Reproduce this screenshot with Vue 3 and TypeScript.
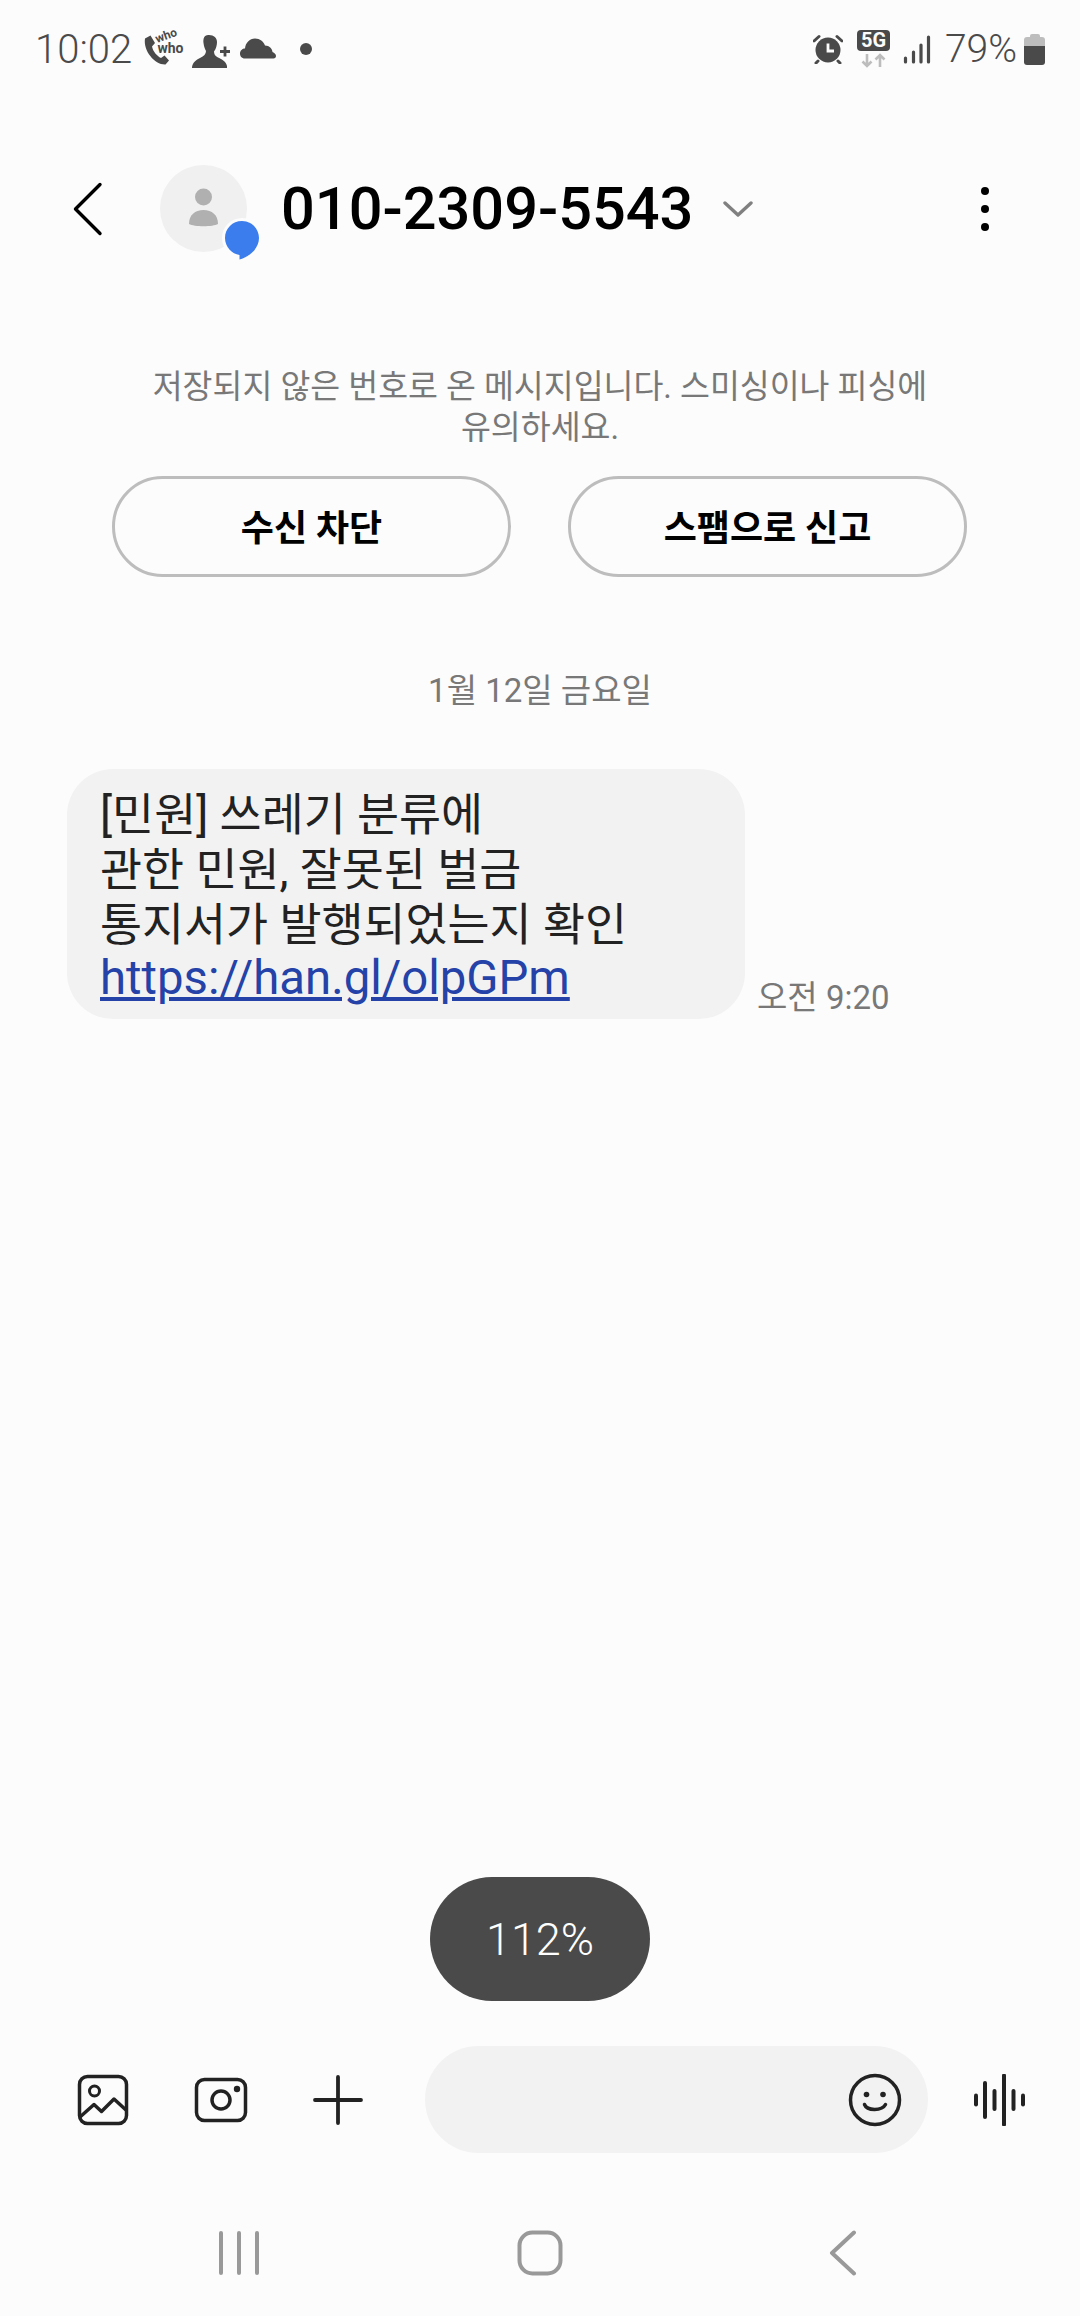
<script setup lang="ts">
const lines: string[] = [
  "[민원] 쓰레기 분류에",
  "관한 민원, 잘못된 벌금",
  "통지서가 발행되었는지 확인",
];
const waveBars: { x: number; h: number }[] = [
  { x: 3, h: 9 },
  { x: 12, h: 34 },
  { x: 21.5, h: 18 },
  { x: 31, h: 49 },
  { x: 40.5, h: 18 },
  { x: 50, h: 9 },
];
</script>

<template>
  <div class="page">
    <!-- status bar -->
    <div class="status">
      <span class="clock">10:02</span>
      <svg class="ic-call" width="40" height="34" viewBox="0 0 40 34">
        <path d="M1 6.500 6.500 3.500 11 11 8 14.500C9 19.500 13 24 17 26L20.500 23.500 25 28.500 21.500 32.500C11 33 -1 19 1 6.500Z" fill="#4a4a4a" />
        <text x="13" y="11" class="who who-top" transform="rotate(-20 13 11)">who</text>
        <text x="13.500" y="20.500" class="who">who</text>
      </svg>
      <svg class="ic-person" width="38" height="34" viewBox="0 0 38 34">
        <path d="M17 1C12 .5 11 5 11.500 9 12 13 13 15 14 17 14 20 12 22 8 24 4 26 1 28 0 33V34H35V32C34 27 29 25 26 23.500 23 22 22 20 22 17.500 24 15 25 11 25 8 25 4 22 1 17 1Z" fill="#4a4a4a" />
        <path d="M28 17.500H38M33 12.500V22.500" stroke="#4a4a4a" stroke-width="2.800" />
      </svg>
      <svg class="ic-cloud" width="36" height="21" viewBox="0 0 36 21">
        <path d="M5 20.500C1.500 20.500 0 18 0 15.500 0 12.500 2.500 10.500 5 10.500 5.500 5 9.500 .5 15 .5 20 .5 23.500 3.500 25 7.500 29.500 7.500 32 10.500 32.500 14 34.500 14.500 36 16.500 36 18 36 19.500 35 20.500 33.500 20.500Z" fill="#4a4a4a" />
      </svg>
      <i class="notif-dot"></i>
      <span class="grow"></span>
      <svg class="ic-alarm" width="30" height="30" viewBox="0 0 30 30">
        <circle cx="15" cy="16" r="12.500" fill="#4a4a4a" />
        <path d="M1 7 6 2.500M29 7 24 2.500M5 27 3 29M25 27 27 29" stroke="#4a4a4a" stroke-width="3" stroke-linecap="round" />
        <path d="M15 9.500V17H21" stroke="#fcfcfc" stroke-width="2.800" fill="none" />
      </svg>
      <svg class="ic-5g" width="34" height="38" viewBox="0 0 34 38">
        <rect width="33" height="21" rx="4" fill="#4a4a4a" />
        <text x="16.500" y="17" class="five-g">5G</text>
        <path d="M10 24V36M5.500 31.500 10 36 14.500 31.500M23 37V25M18.500 29.500 23 25 27.500 29.500" stroke="#bdbdbd" stroke-width="2.600" fill="none" />
      </svg>
      <svg class="ic-signal" width="28" height="29" viewBox="0 0 28 29">
        <path d="M2.500 23V27M10.500 17V27M18 10V27M25.500 2V27" stroke="#4a4a4a" stroke-width="3.200" stroke-linecap="round" />
      </svg>
      <span class="battery-text">79%</span>
      <div class="battery"><i></i><b></b></div>
    </div>

    <!-- conversation header -->
    <header class="header">
      <svg class="back" width="30" height="54" viewBox="0 0 30 54">
        <path d="M27 2.500 2.500 27 27 51.500" stroke="#000" stroke-width="3.400" fill="none" stroke-linecap="round" stroke-linejoin="round" />
      </svg>
      <div class="avatar">
        <svg width="87" height="87" viewBox="0 0 87 87">
          <circle cx="43.500" cy="32" r="8.500" fill="#b0b0b0" />
          <path d="M29 59C29 50 35 45 43.500 45 52 45 58 50 58 59 53 62 34 62 29 59Z" fill="#b0b0b0" />
        </svg>
        <svg class="chat-badge" width="40" height="44" viewBox="0 0 40 44">
          <circle cx="20" cy="20" r="20" fill="#fcfcfc" />
          <path d="M20 3C10.500 3 3 10.500 3 20 3 29 10 36 17.500 37V41.500C25 39.500 37 32 37 20 37 10.500 29.500 3 20 3Z" fill="#3b7ded" />
        </svg>
      </div>
      <h1 class="number">010-2309-5543</h1>
      <svg class="caret" width="30" height="16" viewBox="0 0 30 16">
        <path d="M2 2 15 14 28 2" stroke="#808080" stroke-width="3.400" fill="none" stroke-linecap="round" stroke-linejoin="round" />
      </svg>
      <span class="grow"></span>
      <div class="more"><i></i><i></i><i></i></div>
    </header>

    <p class="notice">저장되지 않은 번호로 온 메시지입니다. 스미싱이나 피싱에<br />유의하세요.</p>

    <div class="actions">
      <button class="action">수신 차단</button>
      <button class="action">스팸으로 신고</button>
    </div>

    <div class="date">1월 12일 금요일</div>

    <div class="message">
      <div class="bubble">
        <div v-for="line in lines" :key="line" class="line">{{ line }}</div>
        <a class="line link">https://han.gl/olpGPm</a>
      </div>
      <span class="sent-at">오전 9:20</span>
    </div>

    <span class="grow"></span>

    <div class="zoom-pill">112%</div>

    <!-- composer -->
    <div class="composer">
      <svg class="tool-gallery" width="52" height="52" viewBox="0 0 52 52">
        <rect x="2.500" y="2.500" width="47" height="47" rx="8" stroke="#222" stroke-width="3.500" fill="none" />
        <circle cx="17.500" cy="17" r="5" stroke="#222" stroke-width="3" fill="none" />
        <path d="M3 43 17 30.500 24.500 37.500 37 25 49 36" stroke="#222" stroke-width="3.500" fill="none" stroke-linejoin="round" />
      </svg>
      <svg class="tool-camera" width="54" height="46" viewBox="0 0 54 46">
        <rect x="2.500" y="2.500" width="49" height="41" rx="8" stroke="#222" stroke-width="3.500" fill="none" />
        <circle cx="27" cy="23" r="9" stroke="#222" stroke-width="3.500" fill="none" />
        <circle cx="43" cy="12" r="3.200" fill="#222" />
      </svg>
      <svg class="tool-plus" width="50" height="50" viewBox="0 0 50 50">
        <path d="M25 2V48M2 25H48" stroke="#222" stroke-width="3.800" stroke-linecap="round" />
      </svg>
      <div class="input">
        <svg width="54" height="54" viewBox="0 0 54 54">
          <circle cx="27" cy="27" r="24.500" stroke="#222" stroke-width="3.500" fill="none" />
          <circle cx="18.500" cy="21.500" r="2.800" fill="#222" />
          <circle cx="35" cy="21.500" r="2.800" fill="#222" />
          <path d="M16.500 31.500C19 38 34 38 37.500 31.500" stroke="#222" stroke-width="3.500" fill="none" stroke-linecap="round" />
        </svg>
      </div>
      <svg class="tool-wave" width="53" height="52" viewBox="0 0 53 52">
        <line
          v-for="bar in waveBars"
          :key="bar.x"
          :x1="bar.x"
          :x2="bar.x"
          :y1="26 - bar.h / 2"
          :y2="26 + bar.h / 2"
          stroke="#222"
          stroke-width="4"
          stroke-linecap="round"
        />
      </svg>
    </div>

    <!-- system navigation -->
    <nav class="nav">
      <svg class="nav-recent" width="42" height="44" viewBox="0 0 42 44">
        <path d="M3 2V42M21 2V42M39 2V42" stroke="#999" stroke-width="4" stroke-linecap="round" />
      </svg>
      <svg class="nav-home" width="46" height="46" viewBox="0 0 46 46">
        <rect x="2.500" y="2.500" width="41" height="41" rx="13" stroke="#999" stroke-width="4" fill="none" />
      </svg>
      <svg class="nav-back" width="28" height="46" viewBox="0 0 28 46">
        <path d="M25 2.500 3 23 25 43.500" stroke="#999" stroke-width="4" fill="none" stroke-linecap="round" stroke-linejoin="round" />
      </svg>
    </nav>
  </div>
</template>

<style>
html,
body {
  margin: 0;
  background: #fcfcfc;
}
</style>

<style scoped>
.page {
  width: 1080px;
  height: 2316px;
  display: flex;
  flex-direction: column;
  background: #fcfcfc;
  font-family: Roboto, "Noto Sans CJK KR", sans-serif;
  overflow: hidden;
}

.grow {
  flex: 1;
}

/* status bar */
.status {
  height: 98px;
  padding: 0 35px 0 35px;
  display: flex;
  align-items: center;
  box-sizing: border-box;
  color: #4a4a4a;
  flex-shrink: 0;
}

.clock {
  font-size: 40px;
  font-weight: 300;
}

.ic-call {
  margin-left: 12px;
  overflow: visible;
}

.ic-person {
  margin-left: 8px;
  margin-top: 4px;
}

.ic-cloud {
  margin-left: 10px;
  margin-top: -1px;
}

.notif-dot {
  width: 12px;
  height: 12px;
  margin-left: 24px;
  border-radius: 50%;
  background: #4a4a4a;
}

.who {
  font-size: 14px;
  font-weight: 700;
  fill: #4a4a4a;
  font-family: Roboto, sans-serif;
}

.who-top {
  font-size: 12px;
}

.five-g {
  font-size: 20px;
  font-weight: 700;
  fill: #fcfcfc;
  text-anchor: middle;
  font-family: Roboto, sans-serif;
}

.ic-alarm {
  margin-right: -1px;
}

.ic-5g {
  margin-left: 15px;
  overflow: visible;
}

.ic-signal {
  margin-left: 12px;
}

.battery-text {
  margin-left: 14px;
  font-size: 39px;
  font-weight: 300;
}

.battery {
  width: 21px;
  height: 31px;
  margin-left: 7px;
  display: flex;
  flex-direction: column;
  align-items: center;
}

.battery i {
  width: 10px;
  height: 3px;
  background: #bdbdbd;
  border-radius: 2px 2px 0 0;
}

.battery b {
  width: 21px;
  flex: 1;
  border-radius: 3px;
  background: linear-gradient(#bdbdbd 0 9px, #4a4a4a 9px);
}

/* header */
.header {
  height: 100px;
  margin-top: 61px;
  display: flex;
  align-items: center;
  padding-left: 73px;
  padding-right: 91px;
  flex-shrink: 0;
}

.avatar {
  width: 87px;
  height: 87px;
  margin-left: 57px;
  margin-top: -2px;
  border-radius: 50%;
  background: #f0f0f0;
  position: relative;
  flex-shrink: 0;
}

.avatar svg {
  display: block;
}

.chat-badge {
  position: absolute;
  left: 62px;
  top: 53px;
}

.number {
  margin: 0 0 0 34px;
  font-size: 59.5px;
  font-weight: 500;
  color: #000;
  letter-spacing: 0;
}

.caret {
  margin-left: 30px;
}

.more {
  display: flex;
  flex-direction: column;
  gap: 10px;
}

.more i {
  width: 8px;
  height: 8px;
  border-radius: 50%;
  background: #000;
}

/* spam notice */
.notice {
  margin: 108px 0 0;
  text-align: center;
  font-size: 32.5px;
  line-height: 41px;
  color: #787878;
}

.actions {
  display: flex;
  gap: 57px;
  padding-left: 112px;
  margin-top: 27px;
}

.action {
  width: 399px;
  height: 101px;
  box-sizing: border-box;
  border: 3px solid #bdbdbd;
  border-radius: 51px;
  background: transparent;
  font-family: inherit;
  font-size: 36px;
  font-weight: 700;
  color: #000;
  padding: 0 0 3px;
}

.date {
  margin-top: 90px;
  text-align: center;
  font-size: 33px;
  line-height: 48px;
  color: #787878;
}

.message {
  display: flex;
  align-items: flex-end;
  margin: 54px 0 0 67px;
}

.bubble {
  width: 678px;
  height: 250px;
  box-sizing: border-box;
  padding: 19px 33px 0;
  border-radius: 46px;
  background: #f2f2f2;
}

.line {
  display: block;
  font-size: 45.7px;
  line-height: 55px;
  color: #222;
}

.link {
  margin-top: -2px;
  font-size: 47.3px;
  color: #2442a8;
  text-decoration: underline;
  text-underline-offset: 3px;
}

.sent-at {
  margin: 0 0 1px 12px;
  font-size: 33px;
  line-height: 40px;
  color: #787878;
}

.zoom-pill {
  align-self: center;
  width: 220px;
  height: 124px;
  display: flex;
  align-items: center;
  justify-content: center;
  border-radius: 62px;
  background: #4a4a4a;
  color: #fff;
  font-size: 45px;
  font-weight: 300;
  flex-shrink: 0;
}

/* composer */
.composer {
  height: 107px;
  margin-top: 45px;
  display: flex;
  align-items: center;
  padding-left: 77px;
  flex-shrink: 0;
}

.tool-camera {
  margin-left: 65px;
}

.tool-plus {
  margin-left: 65px;
}

.input {
  width: 503px;
  height: 107px;
  margin-left: 62px;
  display: flex;
  align-items: center;
  justify-content: flex-end;
  padding-right: 26px;
  box-sizing: border-box;
  border-radius: 54px;
  background: #f2f2f2;
}

.tool-wave {
  margin-left: 45px;
}

/* nav */
.nav {
  height: 163px;
  display: flex;
  align-items: center;
  padding-top: 36px;
  padding-left: 218px;
  box-sizing: border-box;
  flex-shrink: 0;
}

.nav-home {
  margin-left: 257px;
}

.nav-back {
  margin-left: 266px;
}
</style>
